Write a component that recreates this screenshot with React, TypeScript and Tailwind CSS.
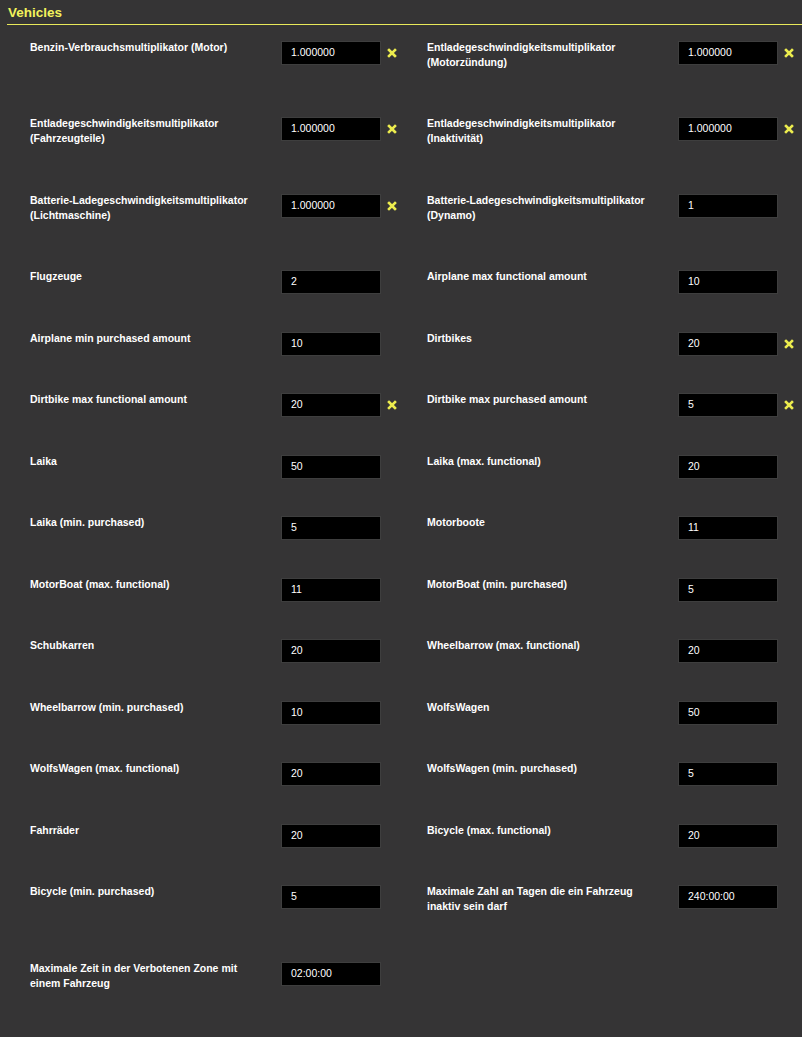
import React from "react";

type Item = { label: string; value: string; x?: boolean };

const items: Item[] = [
  { label: "Benzin-Verbrauchsmultiplikator (Motor)", value: "1.000000", x: true },
  { label: "Entladegeschwindigkeitsmultiplikator (Motorzündung)", value: "1.000000", x: true },
  { label: "Entladegeschwindigkeitsmultiplikator (Fahrzeugteile)", value: "1.000000", x: true },
  { label: "Entladegeschwindigkeitsmultiplikator (Inaktivität)", value: "1.000000", x: true },
  { label: "Batterie-Ladegeschwindigkeitsmultiplikator (Lichtmaschine)", value: "1.000000", x: true },
  { label: "Batterie-Ladegeschwindigkeitsmultiplikator (Dynamo)", value: "1" },
  { label: "Flugzeuge", value: "2" },
  { label: "Airplane max functional amount", value: "10" },
  { label: "Airplane min purchased amount", value: "10" },
  { label: "Dirtbikes", value: "20", x: true },
  { label: "Dirtbike max functional amount", value: "20", x: true },
  { label: "Dirtbike max purchased amount", value: "5", x: true },
  { label: "Laika", value: "50" },
  { label: "Laika (max. functional)", value: "20" },
  { label: "Laika (min. purchased)", value: "5" },
  { label: "Motorboote", value: "11" },
  { label: "MotorBoat (max. functional)", value: "11" },
  { label: "MotorBoat (min. purchased)", value: "5" },
  { label: "Schubkarren", value: "20" },
  { label: "Wheelbarrow (max. functional)", value: "20" },
  { label: "Wheelbarrow (min. purchased)", value: "10" },
  { label: "WolfsWagen", value: "50" },
  { label: "WolfsWagen (max. functional)", value: "20" },
  { label: "WolfsWagen (min. purchased)", value: "5" },
  { label: "Fahrräder", value: "20" },
  { label: "Bicycle (max. functional)", value: "20" },
  { label: "Bicycle (min. purchased)", value: "5" },
  { label: "Maximale Zahl an Tagen die ein Fahrzeug inaktiv sein darf", value: "240:00:00" },
  { label: "Maximale Zeit in der Verbotenen Zone mit einem Fahrzeug", value: "02:00:00" },
];

function XIcon() {
  return (
    <svg width="10" height="10" viewBox="0 0 10 10" className="block">
      <path d="M2 2 L8 8 M8 2 L2 8" stroke="#ecec4e" strokeWidth="2.6" strokeLinecap="square" />
    </svg>
  );
}

function Cell({ item }: { item: Item }) {
  return (
    <div className="flex items-start">
      <div className="w-[240px] pb-[46.5px] text-[10.5px] leading-[15px] font-bold text-white">{item.label}</div>
      <div className="ml-[11px] mt-[1px] flex h-[24px] w-[100px] items-center border border-[#3e3e3e] bg-black pl-[9px] text-[10.5px] text-white">
        {item.value}
      </div>
      {item.x && (
        <div className="ml-[6px] mt-[8px]">
          <XIcon />
        </div>
      )}
    </div>
  );
}

export default function App() {
  return (
    <div className="min-h-screen bg-[#353435]" style={{ fontFamily: '"Liberation Sans", Arial, sans-serif' }}>
      <div className="ml-[7px] border-b border-[#e8e85a] pl-[1px] pt-[4px] pb-[3px] text-[13.5px] leading-[17px] font-bold text-[#f2f25c]">
        Vehicles
      </div>
      <div className="grid grid-cols-[397px_397px] pl-[30px] pt-[14.5px]">
        {items.map((it, i) => (
          <Cell key={i} item={it} />
        ))}
      </div>
    </div>
  );
}
